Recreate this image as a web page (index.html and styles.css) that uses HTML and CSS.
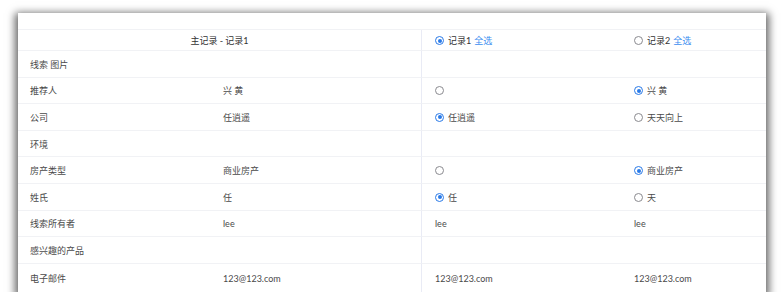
FILE: index.html
```html
<!DOCTYPE html>
<html lang="zh">
<head>
<meta charset="utf-8">
<link rel="stylesheet" href="styles.css">
</head>
<body>
<div class="card">
  <div class="top"></div>
  <div class="grid">
    <div class="cell head span2">主记录 - 记录1</div>
    <div class="cell head c3"><span class="radio on"></span>记录1 <a class="all">全选</a></div>
    <div class="cell head"><span class="radio"></span>记录2 <a class="all">全选</a></div>

    <div class="cell">线索 图片</div><div class="cell"></div><div class="cell c3"></div><div class="cell"></div>

    <div class="cell">推荐人</div><div class="cell">兴 黄</div>
    <div class="cell c3"><span class="radio"></span></div>
    <div class="cell"><span class="radio on"></span>兴 黄</div>

    <div class="cell">公司</div><div class="cell">任逍遥</div>
    <div class="cell c3"><span class="radio on"></span>任逍遥</div>
    <div class="cell"><span class="radio"></span>天天向上</div>

    <div class="cell">环境</div><div class="cell"></div><div class="cell c3"></div><div class="cell"></div>

    <div class="cell">房产类型</div><div class="cell">商业房产</div>
    <div class="cell c3"><span class="radio"></span></div>
    <div class="cell"><span class="radio on"></span>商业房产</div>

    <div class="cell">姓氏</div><div class="cell">任</div>
    <div class="cell c3"><span class="radio on"></span>任</div>
    <div class="cell"><span class="radio"></span>天</div>

    <div class="cell">线索所有者</div><div class="cell">lee</div>
    <div class="cell c3">lee</div><div class="cell">lee</div>

    <div class="cell">感兴趣的产品</div><div class="cell"></div><div class="cell c3"></div><div class="cell"></div>

    <div class="cell last">电子邮件</div><div class="cell last">123@123.com</div>
    <div class="cell c3 last">123@123.com</div><div class="cell last">123@123.com</div>
  </div>
</div>
</body>
</html>
```

FILE: styles.css
```css
html, body {
  margin: 0;
  padding: 0;
  background: #ffffff;
}
body {
  font-family: "Lato", "Noto Sans CJK SC", sans-serif;
  font-size: 9px;
  color: #4a4a4a;
}
.card {
  margin: 13px 0 0 18px;
  width: 748px;
  height: 279px;
  background: #fff;
  box-shadow: 0 3px 8px 3px rgba(0, 0, 0, 0.6);
  overflow: hidden;
}
.top {
  height: 16px;
  border-bottom: 1px solid #f1f2f5;
}
.grid {
  display: grid;
  grid-template-columns: 193px 210px 201px 1fr;
  grid-template-rows: 21px repeat(8, 26.6px) 28px;
}
.cell {
  display: flex;
  align-items: center;
  padding: 1px 0 0 12px;
  border-bottom: 1px solid #f1f2f5;
  white-space: nowrap;
}
.cell.last {
  border-bottom: none;
}
.c3 {
  border-left: 1px solid #e9ebf5;
  padding-left: 13px;
}
.head {
  color: #333;
}
.span2 {
  grid-column: span 2;
  justify-content: center;
  padding-left: 0;
}
.radio {
  box-sizing: border-box;
  width: 9px;
  height: 9px;
  border-radius: 50%;
  border: 1px solid #8a8a8f;
  margin-right: 4px;
  flex: none;
  position: relative;
  background: #fff;
}
.radio.on {
  border-color: #2a7ae8;
}
.radio.on::after {
  content: "";
  position: absolute;
  left: 1.5px;
  top: 1.5px;
  width: 4px;
  height: 4px;
  border-radius: 50%;
  background: #2a7ae8;
}
.all {
  color: #3b8ef0;
  margin-left: 3px;
}
```
